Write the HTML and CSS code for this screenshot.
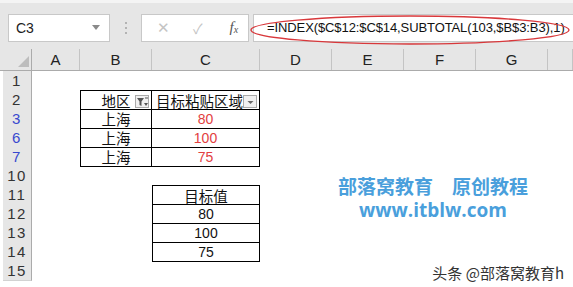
FILE: index.html
```html
<!DOCTYPE html>
<html>
<head>
    <meta charset="UTF-8">
    <title>SUBTOTAL 筛选粘贴</title>
    <link rel="stylesheet" href="styles.css">
</head>
<body>
    <div class="toolbar">
        <div class="namebox">
            <span>C3</span>
            <svg class="namebox-arrow" width="8" height="5" viewBox="0 0 8 5"><path d="M0 0 H8 L4 5 Z" fill="#8a8a8a"/></svg>
        </div>
        <div class="grip"><i></i><i></i><i></i></div>
        <div class="fxbox">
            <span class="btn-cancel">✕</span>
            <span class="btn-ok">✓</span>
            <span class="btn-fx">f<sub>x</sub></span>
        </div>
        <div class="formula">=INDEX($C$12:$C$14,SUBTOTAL(103,$B$3:B3),1)</div>
        <!-- 红圈标注 -->
        <svg class="mark-ellipse" width="324" height="32" viewBox="0 0 324 32">
            <ellipse cx="162" cy="16" rx="159" ry="14" fill="none" stroke="#d8383b" stroke-width="1.4"/>
        </svg>
    </div>

    <div class="sheet">
        <div class="row colhead">
            <div class="corner"><svg width="11" height="11" viewBox="0 0 11 11"><path d="M11 0 V11 H0 Z" fill="#bdbdbd"/></svg></div>
            <div class="colname">A</div>
            <div class="colname">B</div>
            <div class="colname">C</div>
            <div class="colname">D</div>
            <div class="colname">E</div>
            <div class="colname">F</div>
            <div class="colname">G</div>
            <div class="colname"></div>
        </div>

        <div class="row"><div class="rownum">1</div></div>

        <div class="row">
            <div class="rownum">2</div>
            <div class="cell col-b box top left"><span class="txt">地区</span>
                <span class="filter-btn">
                    <svg width="13" height="12" viewBox="0 0 13 12"><path d="M1 2 H8 L5.5 5.5 V10 L3.5 9 V5.5 Z" fill="#555"/><path d="M8 7 H12 L10 10 Z" fill="#555"/><path d="M9 2 H12" stroke="#555" stroke-width="1"/></svg>
                </span>
            </div>
            <div class="cell col-c box top head-c"><span class="txt">目标粘贴区域</span>
                <span class="filter-btn">
                    <svg width="13" height="12" viewBox="0 0 13 12"><path d="M3.5 5 H9.5 L6.5 8 Z" fill="#666"/></svg>
                </span>
            </div>
        </div>

        <div class="row">
            <div class="rownum filtered">3</div>
            <div class="cell col-b box left"><span class="txt">上海</span></div>
            <div class="cell col-c box num red">80</div>
        </div>
        <div class="row">
            <div class="rownum filtered">6</div>
            <div class="cell col-b box left"><span class="txt">上海</span></div>
            <div class="cell col-c box num red">100</div>
        </div>
        <div class="row">
            <div class="rownum filtered">7</div>
            <div class="cell col-b box left"><span class="txt">上海</span></div>
            <div class="cell col-c box num red">75</div>
        </div>

        <div class="row"><div class="rownum">10</div></div>

        <div class="row">
            <div class="rownum">11</div>
            <div class="cell col-c box top left"><span class="txt">目标值</span></div>
        </div>
        <div class="row">
            <div class="rownum">12</div>
            <div class="cell col-c box left num">80</div>
        </div>
        <div class="row">
            <div class="rownum">13</div>
            <div class="cell col-c box left num">100</div>
        </div>
        <div class="row">
            <div class="rownum">14</div>
            <div class="cell col-c box left num">75</div>
        </div>
        <div class="row"><div class="rownum">15</div></div>
    </div>

    <div class="watermark">
        <div class="wm-title">部落窝教育<span class="wm-gap"></span>原创教程</div>
        <div class="wm-url">www.itblw.com</div>
    </div>
    <div class="source">头条 @部落窝教育h</div>
</body>
</html>
```

FILE: styles.css
```css
/* 表格截图 */
body {
    margin: 0;
    padding: 0;
    position: relative;
    width: 573px;
    height: 287px;
    overflow: hidden;
    background-color: #fff;
    font-family: "Liberation Sans", "Noto Sans CJK SC", sans-serif;
}

/* 顶部编辑栏 */
.toolbar {
    position: relative;
    display: flex;
    align-items: center;
    height: 46px;
    box-sizing: border-box;
    padding: 12px 0 6px 8px;
    border-top: 3px solid #f4f4f4;
    background-color: #e6e6e6;
}

.namebox {
    display: flex;
    align-items: center;
    justify-content: space-between;
    width: 102px;
    height: 28px;
    box-sizing: border-box;
    padding: 0 9px 0 7px;
    background-color: #fff;
    border: 1px solid #c8c8c8;
    font-size: 14px;
    color: #222;
}

.grip {
    display: flex;
    flex-direction: column;
    align-items: center;
    gap: 3px;
    width: 31px;
}

.grip i {
    display: block;
    width: 2px;
    height: 2px;
    background-color: #b3b3b3;
}

.fxbox {
    display: flex;
    align-items: center;
    width: 108px;
    height: 28px;
    box-sizing: border-box;
    background-color: #fff;
    border: 1px solid #c8c8c8;
    color: #c4c4c4;
    font-size: 15px;
}

.btn-cancel {
    margin-left: 15px;
}

.btn-ok {
    margin-left: 23px;
    font-size: 14px;
}

.btn-fx {
    margin-left: 27px;
    font-family: "Liberation Serif", serif;
    font-style: italic;
    color: #555;
    font-size: 15px;
}

.btn-fx sub {
    font-size: 10px;
    vertical-align: -1px;
}

.formula {
    flex: 1;
    height: 28px;
    box-sizing: border-box;
    margin-left: 4px;
    padding-left: 13px;
    background-color: #fff;
    border: 1px solid #c8c8c8;
    border-right: none;
    font-size: 13px;
    letter-spacing: -0.1px;
    line-height: 26px;
    color: #111;
    white-space: nowrap;
}

.mark-ellipse {
    position: absolute;
    left: 248px;
    top: 11px;
}

/* 工作表 */
.sheet {
    border-top: 3px solid #e6e6e6;
}

.row {
    display: grid;
    grid-template-columns: 3px 29px 48px 72px 108px 72px 72px 72px 72px 1fr;
    height: 19px;
}

.colhead {
    height: 22px;
    background-color: #e6e6e6;
    border-bottom: 1px solid #ababab;
    box-sizing: border-box;
}

.corner {
    grid-column: 2;
    display: flex;
    align-items: flex-end;
    justify-content: flex-end;
    padding: 0 2px 3px 0;
    border-right: 1px solid #ababab;
}

.colname {
    border-right: 1px solid #c4c4c4;
    text-align: center;
    font-size: 15px;
    line-height: 21px;
    color: #222;
}

.rownum {
    grid-column: 2;
    background-color: #e6e6e6;
    border-right: 1px solid #ababab;
    border-bottom: 1px solid #d2d2d2;
    box-sizing: border-box;
    text-align: center;
    font-size: 15px;
    letter-spacing: 1.5px;
    line-height: 19px;
    color: #333;
}

.rownum.filtered {
    color: #3949cf;
}

.cell {
    position: relative;
    display: flex;
    align-items: center;
    justify-content: center;
    box-sizing: border-box;
    font-size: 14px;
    color: #111;
}

.cell .txt {
    font-family: "Noto Sans CJK SC", sans-serif;
    font-size: 14.5px;
    line-height: 15px;
}

.col-b {
    grid-column: 4;
}

.col-c {
    grid-column: 5;
}

.box {
    border-right: 1px solid #000;
    border-bottom: 1px solid #000;
}

.box.top {
    border-top: 1px solid #000;
}

.box.left {
    border-left: 1px solid #000;
}

.head-c {
    justify-content: flex-start;
    padding-left: 4px;
}

.num {
    font-family: "Liberation Sans", sans-serif;
    font-size: 14px;
    line-height: 16px;
}

.red {
    color: #e2403f;
}

.filter-btn {
    position: absolute;
    right: 2px;
    bottom: 1px;
    width: 14px;
    height: 13px;
    box-sizing: border-box;
    border: 1px solid #a9a9a9;
    background-color: #f0f0f0;
    line-height: 0;
}

/* 水印 */
.watermark {
    position: absolute;
    left: 323px;
    top: 174px;
    width: 220px;
    text-align: center;
    color: #4a9fdc;
    font-weight: bold;
}

.wm-title {
    font-family: "Noto Sans CJK SC", sans-serif;
    font-size: 19px;
    line-height: 23px;
}

.wm-gap {
    display: inline-block;
    width: 19px;
}

.wm-url {
    font-family: "Open Sans", sans-serif;
    font-size: 19px;
    line-height: 26px;
}

.source {
    position: absolute;
    right: 9px;
    bottom: 5px;
    font-family: "Noto Sans CJK SC", sans-serif;
    font-size: 15px;
    line-height: 18px;
    color: #333;
}
```
